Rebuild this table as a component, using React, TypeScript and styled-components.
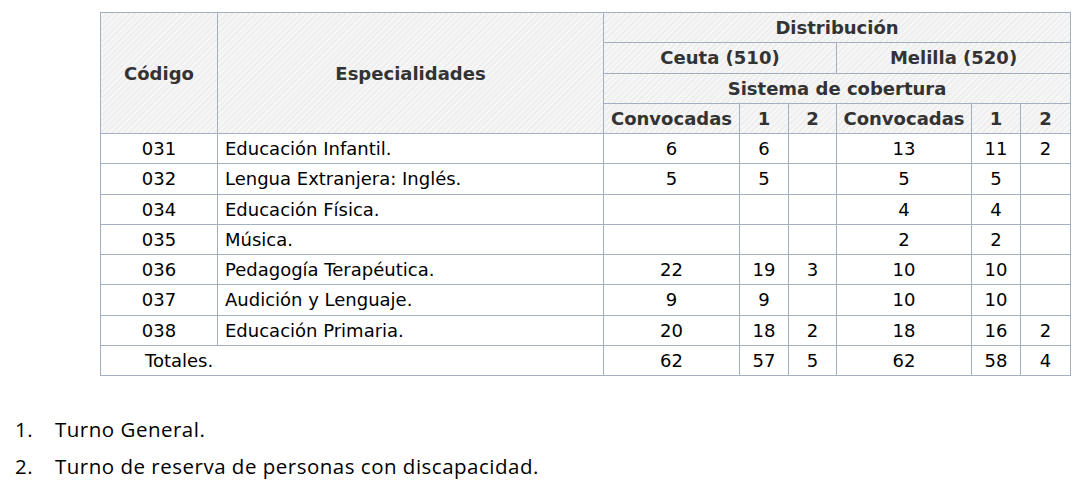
import { createGlobalStyle, styled } from 'styled-components';

const GlobalStyle = createGlobalStyle`
  body {
    margin: 0;
    background: #fff;
    color: #000;
  }
`;

const Page = styled.div`
  padding: 12px 0 0 100px;
`;

const Table = styled.table`
  border-collapse: collapse;
  table-layout: fixed;
  width: 970px;
`;

const HeadCell = styled.th`
  height: 29.25px;
  padding: 0 4px;
  border: 1px solid #a3b0c2;
  font-family: 'DejaVu Sans', Verdana, sans-serif;
  font-size: 18px;
  font-weight: bold;
  color: #333;
  text-align: center;
  white-space: nowrap;
  background-color: #f3f3f3;
  background-image: repeating-linear-gradient(
    -45deg,
    #f8f8f8 0px,
    #f8f8f8 2px,
    #ededed 2px,
    #ededed 4px
  );
`;

const Cell = styled.td<{ $align?: 'left' | 'center'; $indent?: number }>`
  height: 29.25px;
  padding: 0 4px;
  padding-left: ${(p) => (p.$indent ? `${p.$indent}px` : '4px')};
  border: 1px solid #a3b0c2;
  font-family: 'DejaVu Sans', Verdana, sans-serif;
  font-size: 18px;
  color: #000;
  text-align: ${(p) => p.$align || 'center'};
  white-space: nowrap;
`;

const Notes = styled.ol`
  list-style: none;
  margin: 35px 0 0 -85px;
  padding: 0;
  font-family: 'Open Sans', 'Noto Sans', sans-serif;
  font-size: 20.5px;
  color: #000;
`;

const NoteItem = styled.li`
  display: flex;
  line-height: 37px;
  letter-spacing: 0.5px;
`;

const NoteNum = styled.span`
  width: 40px;
  flex: none;
`;

type Row = {
  code: string;
  name: string;
  values: (number | null)[];
};

const rows: Row[] = [
  { code: '031', name: 'Educación Infantil.', values: [6, 6, null, 13, 11, 2] },
  { code: '032', name: 'Lengua Extranjera: Inglés.', values: [5, 5, null, 5, 5, null] },
  { code: '034', name: 'Educación Física.', values: [null, null, null, 4, 4, null] },
  { code: '035', name: 'Música.', values: [null, null, null, 2, 2, null] },
  { code: '036', name: 'Pedagogía Terapéutica.', values: [22, 19, 3, 10, 10, null] },
  { code: '037', name: 'Audición y Lenguaje.', values: [9, 9, null, 10, 10, null] },
  { code: '038', name: 'Educación Primaria.', values: [20, 18, 2, 18, 16, 2] },
];

const totals = [62, 57, 5, 62, 58, 4];

const notes = ['Turno General.', 'Turno de reserva de personas con discapacidad.'];

const App = () => {
  return (
    <>
      <GlobalStyle />
      <Page>
        <Table>
          <colgroup>
            <col style={{ width: 117 }} />
            <col style={{ width: 386 }} />
            <col style={{ width: 136 }} />
            <col style={{ width: 49 }} />
            <col style={{ width: 48 }} />
            <col style={{ width: 135 }} />
            <col style={{ width: 49 }} />
            <col style={{ width: 50 }} />
          </colgroup>
          <thead>
            <tr>
              <HeadCell rowSpan={4}>Código</HeadCell>
              <HeadCell rowSpan={4}>Especialidades</HeadCell>
              <HeadCell colSpan={6}>Distribución</HeadCell>
            </tr>
            <tr>
              <HeadCell colSpan={3}>Ceuta (510)</HeadCell>
              <HeadCell colSpan={3}>Melilla (520)</HeadCell>
            </tr>
            <tr>
              <HeadCell colSpan={6}>Sistema de cobertura</HeadCell>
            </tr>
            <tr>
              <HeadCell>Convocadas</HeadCell>
              <HeadCell>1</HeadCell>
              <HeadCell>2</HeadCell>
              <HeadCell>Convocadas</HeadCell>
              <HeadCell>1</HeadCell>
              <HeadCell>2</HeadCell>
            </tr>
          </thead>
          <tbody>
            {rows.map((r) => (
              <tr key={r.code}>
                <Cell>{r.code}</Cell>
                <Cell $align='left' $indent={7}>
                  {r.name}
                </Cell>
                {r.values.map((v, i) => (
                  <Cell key={i}>{v ?? ''}</Cell>
                ))}
              </tr>
            ))}
            <tr>
              <Cell colSpan={2} $align='left' $indent={44}>
                Totales.
              </Cell>
              {totals.map((v, i) => (
                <Cell key={i}>{v}</Cell>
              ))}
            </tr>
          </tbody>
        </Table>
        <Notes>
          {notes.map((n, i) => (
            <NoteItem key={n}>
              <NoteNum>{i + 1}.</NoteNum>
              {n}
            </NoteItem>
          ))}
        </Notes>
      </Page>
    </>
  );
};

export default App;
